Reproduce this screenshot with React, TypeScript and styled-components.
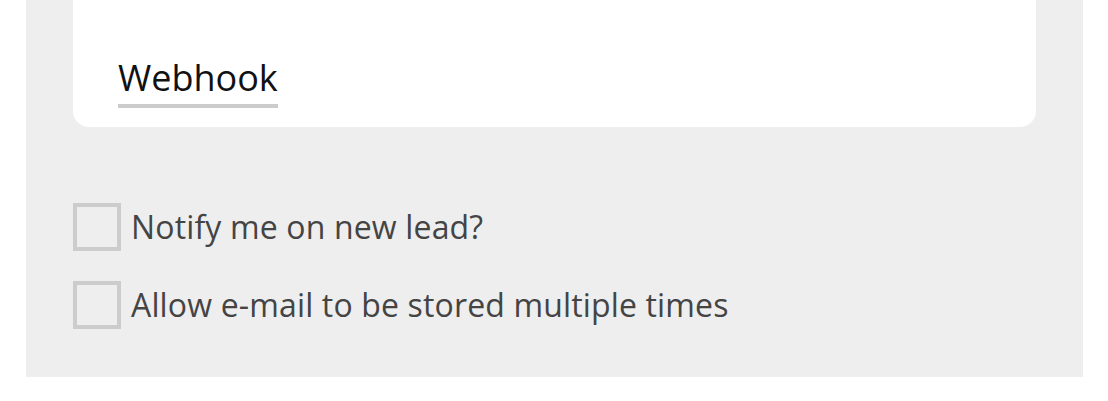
import styled, { createGlobalStyle } from "styled-components";

const GlobalStyle = createGlobalStyle`
  body {
    margin: 0;
    background: #ffffff;
    font-family: "Open Sans", "Liberation Sans", sans-serif;
  }
`;

const Panel = styled.div`
  margin-left: 26px;
  width: 1057px;
  height: 377px;
  background-color: #eeeeee;
  padding: 0 47px;
  box-sizing: border-box;
`;

const Card = styled.div`
  height: 127px;
  background-color: #ffffff;
  border-radius: 0 0 16px 16px;
  padding: 0 45px;
  box-sizing: border-box;
  display: flex;
  align-items: flex-end;
`;

const TabLabel = styled.span`
  display: inline-block;
  margin-bottom: 19px;
  padding-bottom: 2px;
  font-size: 36px;
  line-height: 49px;
  color: #111111;
  border-bottom: 4px solid #cccccc;
`;

const Options = styled.ul`
  list-style: none;
  margin: 0;
  padding: 76px 0 0;
  display: flex;
  flex-direction: column;
  gap: 30px;
`;

const Option = styled.li`
  display: flex;
  align-items: center;
  gap: 10px;
`;

const Box = styled.span`
  width: 48px;
  height: 48px;
  box-sizing: border-box;
  border: 4px solid #cccccc;
  background-color: #eeeeee;
  flex-shrink: 0;
`;

const Label = styled.span`
  font-size: 32px;
  line-height: 44px;
  letter-spacing: 0.15px;
  color: #444444;
`;

const options = ["Notify me on new lead?", "Allow e-mail to be stored multiple times"];

export default function App() {
  return (
    <>
      <GlobalStyle />
      <Panel>
        <Card>
          <TabLabel>Webhook</TabLabel>
        </Card>
        <Options>
          {options.map((text) => (
            <Option key={text}>
              <Box />
              <Label>{text}</Label>
            </Option>
          ))}
        </Options>
      </Panel>
    </>
  );
}
